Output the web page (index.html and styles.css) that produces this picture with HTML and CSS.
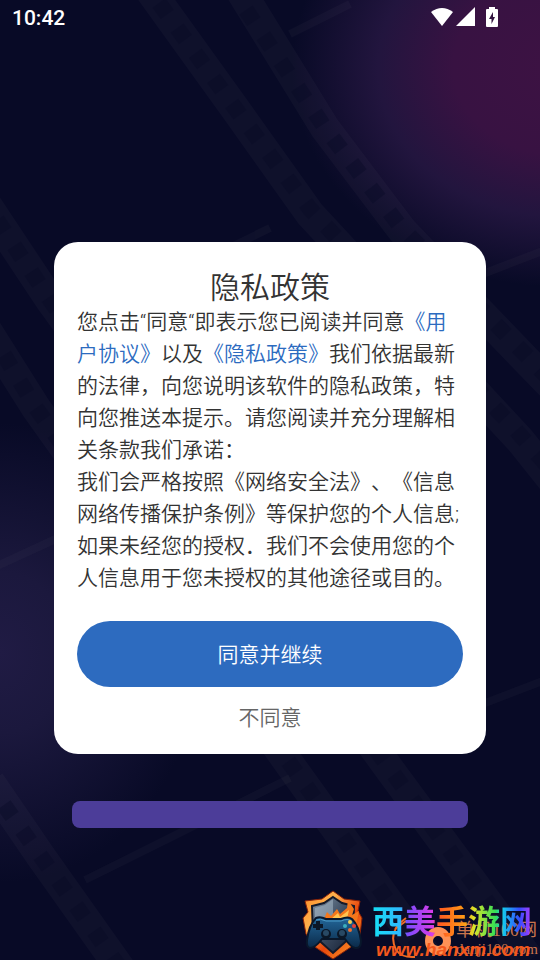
FILE: index.html
```html
<!DOCTYPE html>
<html lang="zh-CN">
  <head>
    <meta charset="UTF-8" />
    <meta name="viewport" content="width=device-width, initial-scale=1" />
    <title>隐私政策</title>
    <link rel="stylesheet" href="styles.css">
  </head>
  <body>
    <!-- film strips behind everything -->
    <svg class="film" viewBox="0 0 540 960" preserveAspectRatio="xMidYMid slice" aria-hidden="true">
      <g class="film-band">
        <path d="M146 -15L236 110L310 214L520 440L560 490" />
        <path d="M240 -10L325 128L402 230L480 312L560 395" />
        <path d="M-15 202L50 300L390 770L530 960" />
        <path d="M-15 327L36 408L298 776L430 960" />
        <path d="M-10 782L42 858L125 975" />
      </g>
      <g class="film-holes">
        <path d="M159 3L235 108L310 209L514 428L560 480" />
        <path d="M246 10L325 128L400 226L480 308L560 390" />
        <path d="M-3 220L50 300L387 765L530 960" />
        <path d="M4 355L36 408L291 765L430 960" />
        <path d="M4 805L42 858L125 975" />
      </g>
      <g class="film-bars">
        <path d="M290 34L350 4" />
        <path d="M225 250L270 228" />
        <path d="M-5 567L60 537" />
        <path d="M85 880L290 778" />
        <path d="M480 275L545 250" />
        <path d="M480 705L545 680" />
      </g>
    </svg>

    <header class="status-bar">
      <time class="clock">10:42</time>
      <div class="status-icons">
        <svg width="24" height="20" viewBox="0 0 24 20">
          <path d="M1 5Q12 -3 23 5L12 19Z" />
        </svg>
        <svg width="20" height="20" viewBox="0 0 20 20">
          <path d="M19 0V19H0Z" />
        </svg>
        <svg class="battery" width="12" height="20" viewBox="0 0 12 20">
          <path d="M3 0H9V2H11Q12 2 12 3V19Q12 20 11 20H1Q0 20 0 19V3Q0 2 1 2H3Z" />
          <path class="bolt" d="M7 5L3 12H5.5V17L9 10H7Z" />
        </svg>
      </div>
    </header>

    <main class="page">
      <section class="dialog" role="dialog" aria-labelledby="title">
        <h1 id="title">隐私政策</h1>
        <p>您点击“同意“即表示您已阅读并同意<a href="#agreement">《用户协议》</a>以及<a href="#privacy">《隐私政策》</a>我们依据最新的法律，向您说明该软件的隐私政策，特向您推送本提示。请您阅读并充分理解相关条款我们承诺：</p>
        <p>我们会严格按照《网络安全法》、《信息网络传播保护条例》等保护您的个人信息;如果未经您的授权．我们不会使用您的个人信息用于您未授权的其他途径或目的。</p>
        <button type="button" class="agree">同意并继续</button>
        <button type="button" class="decline">不同意</button>
      </section>
      <div class="loading-bar"></div>
    </main>

    <!-- site marks in the corner -->
    <footer class="marks">
      <svg class="shield" width="62" height="70" viewBox="0 0 62 70" aria-hidden="true">
        <defs>
          <linearGradient id="fire" x1="0" y1="0" x2="1" y2="1">
            <stop offset="0" stop-color="#ff8a24" />
            <stop offset=".3" stop-color="#ffb04c" />
            <stop offset=".6" stop-color="#e8470c" />
            <stop offset="1" stop-color="#ffad32" />
          </linearGradient>
          <linearGradient id="steel" x1="0" y1="0" x2="1" y2="1">
            <stop offset="0" stop-color="#8295a8" />
            <stop offset=".5" stop-color="#3c4b60" />
            <stop offset="1" stop-color="#101b30" />
          </linearGradient>
          <linearGradient id="pad" x1="0" y1="0" x2="0" y2="1">
            <stop offset="0" stop-color="#23679a" />
            <stop offset="1" stop-color="#0a2948" />
          </linearGradient>
        </defs>
        <path d="M31 1L42 9L58 11L56 21L60 28L58 45L49 57L31 69L13 57L4 44L1 28L6 22L3 11L20 9Z" fill="url(#fire)" stroke="#8b2308" />
        <path d="M31 7L40 13L52 16L51 45L31 63L11 45L10 16L22 13Z" fill="url(#steel)" stroke="#151a29" stroke-width="2" />
        <path d="M31 9V28H13V18L23 15Z" fill="#a7bac8" opacity=".55" />
        <path d="M22 29L25 22L29 26L35 19L38 24L45 18L46 10L52 19L50 25L57 21L54 36Z" fill="#f4771b" />
        <path d="M29 29L36 23L38 27L47 20L45 29L51 28L47 34Z" fill="#ffc450" />
        <path d="M14 28Q18 26 24 29H39Q46 26 50 29Q57 36 59 51Q59 59 53 58Q49 57 43 49H20Q13 58 8 58Q4 57 5 50Q7 35 14 28Z" fill="url(#pad)" stroke="#09172b" stroke-width="2" />
        <path d="M14 30Q18 28 24 31H39Q46 28 49 31" fill="none" stroke="#4b9bc7" />
        <path d="M16 31V40M11 36H21" stroke="#0b1727" stroke-width="4" />
        <circle cx="24" cy="44" r="5" fill="#0b1727" />
        <circle cx="40" cy="44" r="5" fill="#0b1727" />
        <circle cx="24" cy="43" r="3" fill="#284964" />
        <circle cx="40" cy="43" r="3" fill="#284964" />
        <circle cx="48" cy="32" r="2" fill="#f3ce50" />
        <circle cx="43" cy="36" r="2" fill="#3cafbd" />
        <circle cx="52" cy="36" r="2" fill="#e63e37" />
        <circle cx="48" cy="40" r="2" fill="#ed6d2e" />
      </svg>
      <svg class="swirl" width="64" height="44" viewBox="0 0 64 44" aria-hidden="true">
        <path d="M15 2Q-4 15 5 34Q11 42 24 41" fill="none" stroke="#f16b24" stroke-width="2" />
        <path d="M4 13L15 5" stroke="#f16b24" stroke-width="2" />
        <path fill-rule="evenodd" d="M47 11A13 14 0 1 0 47 39A13 14 0 1 0 47 11ZM47 20A5 5 0 1 1 47 30A5 5 0 1 1 47 20Z" fill="#ff9156" />
      </svg>
      <div class="mark-back">
        <span>单机100网</span>
        <span class="mark-url">danji100.com</span>
      </div>
      <div class="mark-front">
        <strong>西美手游网</strong>
        <em>www.hanxm.com</em>
      </div>
    </footer>
  </body>
</html>
```

FILE: styles.css
```css
* {
  box-sizing: border-box;
}
body {
  position: relative;
  display: flex;
  flex-direction: column;
  min-height: 100vh;
  margin: 0;
  overflow-x: hidden;
  font-family: Roboto, "Noto Sans CJK SC", sans-serif;
  color: #333;
  background:
    radial-gradient(ellipse 270px 220px at 104% 7%, #3d1243 0%, #381242 40%, #22153e 68%, rgba(8, 10, 38, 0) 100%),
    radial-gradient(ellipse 200px 230px at 0% 68%, #201b44 0%, #1b183d 35%, rgba(8, 10, 38, 0) 100%),
    #080a26;
}
.film {
  position: absolute;
  inset: 0;
  width: 100%;
  height: 100%;
  fill: none;
}
.film-band {
  stroke: #8d8a91;
  stroke-width: 30;
  opacity: 0.05;
}
.film-holes {
  stroke: #080a26;
  stroke-width: 16;
  stroke-dasharray: 14 17;
  opacity: 0.4;
}
.film-bars {
  stroke: #8d8a91;
  stroke-width: 8;
  opacity: 0.05;
}

.status-bar {
  position: relative;
  display: flex;
  justify-content: space-between;
  align-items: center;
  height: 37px;
  padding: 0 42px 0 12px;
  color: #fff;
}
.clock {
  font-size: 21px;
  font-weight: 500;
  line-height: 37px;
}
.status-icons {
  display: flex;
  gap: 2px;
  margin-bottom: 3px;
  fill: #fff;
}
.battery {
  margin-left: 8px;
}
.bolt {
  fill: #32143f;
}

.page {
  position: relative;
  flex: 1;
  padding: 205px 10% 132px;
}
.dialog {
  padding: 28px 23px 20px;
  border-radius: 24px;
  background: #fff;
}
h1 {
  margin: 0;
  font-size: 30px;
  font-weight: 350;
  line-height: 36px;
  text-align: center;
}
p {
  margin: 0;
  font-size: 21px;
  font-weight: 350;
  line-height: 32px;
  text-spacing-trim: space-all;
}
a {
  color: #2c6bbf;
  text-decoration: none;
}
button {
  display: block;
  width: 100%;
  border: 0;
  font-family: inherit;
  font-size: 21px;
  font-weight: 350;
  line-height: 32px;
  cursor: pointer;
}
.agree {
  margin-top: 27px;
  padding: 18px 16px 16px;
  border-radius: 33px;
  color: #fff;
  background: #2d6bbf;
}
.decline {
  margin-top: 15px;
  padding: 0;
  color: #666;
  background: none;
}
.loading-bar {
  height: 27px;
  margin: 47px 18px 0;
  border-radius: 8px;
  background: #4c3d99;
}

.marks {
  position: absolute;
  right: 0;
  bottom: 0;
  width: 238px;
  height: 70px;
}
.shield {
  position: absolute;
  left: 0;
  top: 0;
}
.swirl {
  position: absolute;
  left: 89px;
  bottom: 0;
}
.mark-back {
  position: absolute;
  right: 2px;
  bottom: 2px;
  display: flex;
  flex-direction: column;
  font-family: "Liberation Serif", "Noto Sans CJK SC", serif;
  font-size: 18px;
  line-height: 20px;
  color: #c9744d;
}
.mark-url {
  font-size: 15px;
  line-height: 18px;
}
.mark-front {
  position: absolute;
  right: 8px;
  bottom: 0;
  display: flex;
  flex-direction: column;
}
.mark-front strong {
  font-size: 32px;
  font-weight: 700;
  line-height: 36px;
  color: transparent;
  background: linear-gradient(90deg, #14dff5 0%, #30b9ff 18%, #7b4cff 22%, #d83ce8 38%, #ff5a20 42%, #ff9c16 58%, #d8e52a 64%, #35df55 77%, #15c9ee 82%, #334dff 92%, #b13cff 100%);
  background-clip: text;
}
.mark-front em {
  padding-left: 4px;
  font-family: "Liberation Sans", sans-serif;
  font-size: 19px;
  font-weight: 700;
  line-height: 20px;
  color: #f4571c;
}
```
